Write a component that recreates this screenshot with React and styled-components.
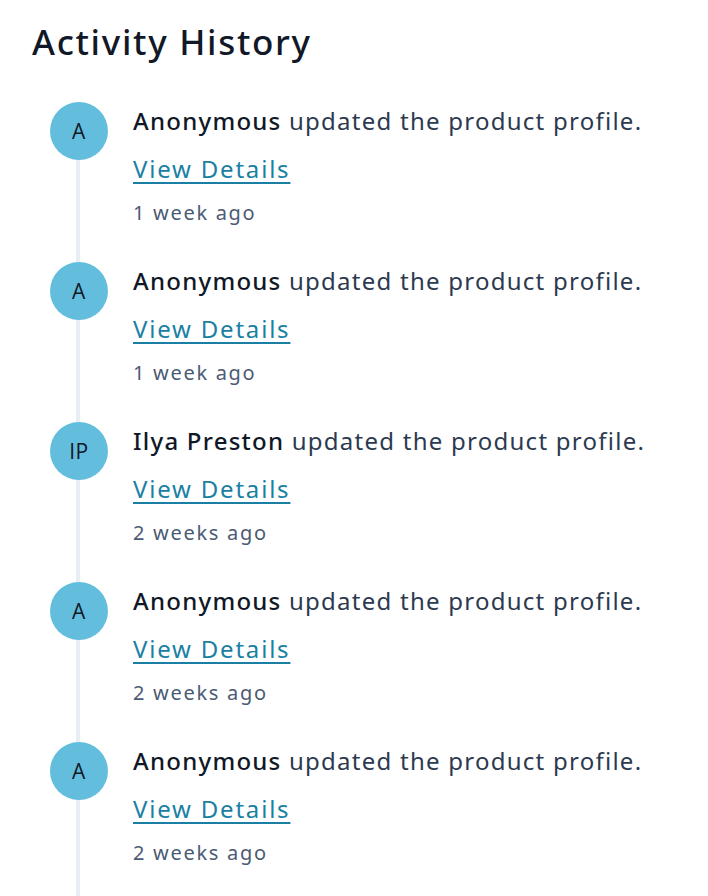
import React from 'react'
import styled, { createGlobalStyle } from 'styled-components'

const GlobalStyle = createGlobalStyle`
  html, body {
    margin: 0;
    padding: 0;
    background: #ffffff;
  }
  body {
    font-family: "Noto Sans", "Open Sans", sans-serif;
    overflow: hidden;
  }
`

const activities = [
  { initials: 'A', name: 'Anonymous', time: '1 week ago' },
  { initials: 'A', name: 'Anonymous', time: '1 week ago' },
  { initials: 'IP', name: 'Ilya Preston', time: '2 weeks ago' },
  { initials: 'A', name: 'Anonymous', time: '2 weeks ago' },
  { initials: 'A', name: 'Anonymous', time: '2 weeks ago' },
]

const App = () => {
  return (
    <>
      <GlobalStyle />
      <Page>
        <Title>Activity History</Title>
        <List>
          {activities.map((a, i) => (
            <Item key={i}>
              <Rail>
                <Avatar>{a.initials}</Avatar>
                <Line />
              </Rail>
              <Content>
                <Message>
                  <Name>{a.name}</Name> updated the product profile.
                </Message>
                <DetailsLink href="#">View Details</DetailsLink>
                <Time>{a.time}</Time>
              </Content>
            </Item>
          ))}
        </List>
      </Page>
    </>
  )
}

export default App

const Page = styled.div`
  padding: 14px 32px 0 32px;
`

const Title = styled.h1`
  margin: 0;
  font-size: 35px;
  font-weight: 500;
  line-height: 56px;
  color: #111827;
  letter-spacing: 1.7px;
`

const List = styled.ul`
  list-style: none;
  margin: 32px 0 0 0;
  padding: 0 0 0 18px;
`

const Item = styled.li`
  display: flex;
  gap: 25px;
  height: 160px;
`

const Rail = styled.div`
  display: flex;
  flex-direction: column;
  align-items: center;
  width: 58px;
  flex-shrink: 0;
`

const Avatar = styled.div`
  width: 58px;
  height: 58px;
  border-radius: 50%;
  background: #63bddd;
  color: #111827;
  display: flex;
  align-items: center;
  justify-content: center;
  font-family: "Open Sans", sans-serif;
  font-size: 21px;
  letter-spacing: 0.5px;
  flex-shrink: 0;
`

const Line = styled.div`
  flex: 1;
  width: 4px;
  margin-left: -2px;
  background: #e9eef5;
`

const Content = styled.div`
  display: flex;
  flex-direction: column;
  padding-top: 1px;
`

const Message = styled.p`
  margin: 0;
  font-size: 24px;
  line-height: 36px;
  color: #2c3a4f;
  letter-spacing: 1.25px;
  white-space: nowrap;
`

const Name = styled.span`
  font-weight: 500;
  color: #111827;
`

const DetailsLink = styled.a`
  align-self: flex-start;
  margin-top: 14px;
  font-size: 24px;
  line-height: 32px;
  color: #1a80a3;
  letter-spacing: 1.8px;
  text-decoration: underline;
  text-underline-offset: 4px;
  text-decoration-thickness: 2px;
`

const Time = styled.div`
  margin-top: 14px;
  font-size: 20px;
  line-height: 28px;
  color: #4b5b74;
  letter-spacing: 1.7px;
`
